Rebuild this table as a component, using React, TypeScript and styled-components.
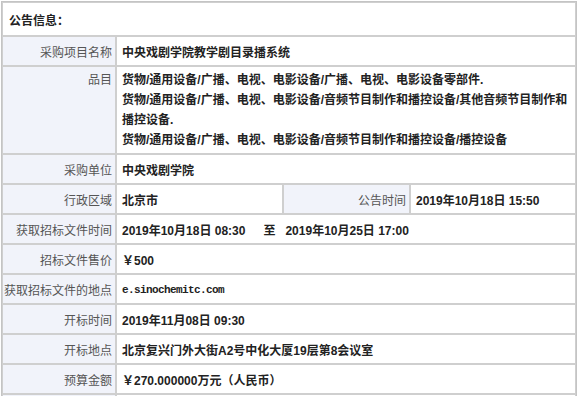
import React from "react";
import styled, { createGlobalStyle } from "styled-components";

const Global = createGlobalStyle`
  html, body { margin: 0; padding: 0; background: #fff; }
  body { font-family: "Liberation Sans", "Noto Sans CJK SC", sans-serif; }
`;

const Page = styled.div`
  padding: 1px 0 0 1px;
  width: 580px;
  box-sizing: border-box;
`;

const Table = styled.table`
  width: 576px;
  table-layout: fixed;
  border-collapse: separate;
  border-spacing: 0;
  border: 1px solid #c4c4c4;
  font-size: 12px;
  font-family: "Liberation Sans", "Noto Sans CJK SC", sans-serif;
`;

const HeadCell = styled.td`
  height: 34px;
  padding: 0 0 0 6px;
  border: 1px solid #cfcfcf;
  font-weight: bold;
  font-size: 12px;
  color: #222;
  background: #fff;
  box-sizing: border-box;
`;

const Label = styled.td`
  background: #f1f3fa;
  color: #555;
  text-align: right;
  vertical-align: middle;
  padding: 0 3px 0 0;
  border: 1px solid #cfcfcf;
  height: 30px;
  box-sizing: border-box;
  white-space: nowrap;
  font-weight: normal;
`;

const TopLabel = styled(Label)`
  vertical-align: top;
  padding-top: 3px;
  line-height: 20px;
`;

const Value = styled.td<{ $multi?: boolean }>`
  color: #222;
  font-weight: bold;
  padding: ${(p) => (p.$multi ? "3px 4px 3px 5px" : "0 4px 0 5px")};
  line-height: ${(p) => (p.$multi ? "20px" : "normal")};
  border: 1px solid #cfcfcf;
  height: 30px;
  box-sizing: border-box;
  background: #fff;
`;

const Mono = styled.span`
  font-family: "Liberation Mono", "DejaVu Sans Mono", monospace;
  font-size: 11px;
  letter-spacing: -0.6px;
`;

const Gap = styled.span<{ $w: number }>`
  display: inline-block;
  width: ${(p) => p.$w}px;
`;

export default function App() {
  return (
    <Page>
      <Global />
      <Table>
        <colgroup>
          <col style={{ width: 114 }} />
          <col style={{ width: 167 }} />
          <col style={{ width: 127 }} />
          <col />
        </colgroup>
        <tbody>
          <tr>
            <HeadCell colSpan={4}>公告信息：</HeadCell>
          </tr>
          <tr>
            <Label>采购项目名称</Label>
            <Value colSpan={3}>中央戏剧学院教学剧目录播系统</Value>
          </tr>
          <tr>
            <TopLabel>品目</TopLabel>
            <Value colSpan={3} $multi>
              货物/通用设备/广播、电视、电影设备/广播、电视、电影设备零部件.
              <br />
              货物/通用设备/广播、电视、电影设备/音频节目制作和播控设备/其他音频节目制作和播控设备.
              <br />
              货物/通用设备/广播、电视、电影设备/音频节目制作和播控设备/播控设备
            </Value>
          </tr>
          <tr>
            <Label>采购单位</Label>
            <Value colSpan={3}>中央戏剧学院</Value>
          </tr>
          <tr>
            <Label>行政区域</Label>
            <Value>北京市</Value>
            <Label>公告时间</Label>
            <Value>2019年10月18日 15:50</Value>
          </tr>
          <tr>
            <Label>获取招标文件时间</Label>
            <Value colSpan={3}>
              2019年10月18日 08:30<Gap $w={18} />至<Gap $w={10} />2019年10月25日 17:00
            </Value>
          </tr>
          <tr>
            <Label>招标文件售价</Label>
            <Value colSpan={3}>￥500</Value>
          </tr>
          <tr>
            <Label>获取招标文件的地点</Label>
            <Value colSpan={3}>
              <Mono>e.sinochemitc.com</Mono>
            </Value>
          </tr>
          <tr>
            <Label>开标时间</Label>
            <Value colSpan={3}>2019年11月08日 09:30</Value>
          </tr>
          <tr>
            <Label>开标地点</Label>
            <Value colSpan={3}>北京复兴门外大街A2号中化大厦19层第8会议室</Value>
          </tr>
          <tr>
            <Label>预算金额</Label>
            <Value colSpan={3}>￥270.000000万元（人民币）</Value>
          </tr>
          <tr>
            <Label>&nbsp;</Label>
            <Value colSpan={3}>&nbsp;</Value>
          </tr>
        </tbody>
      </Table>
    </Page>
  );
}
